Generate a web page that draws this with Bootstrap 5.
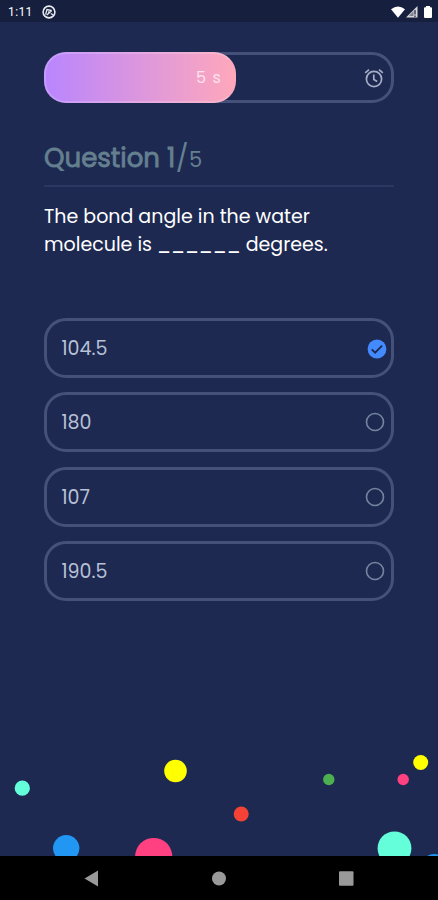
<!DOCTYPE html>
<html lang="en">
<head>
<meta charset="utf-8">
<meta name="viewport" content="width=device-width, initial-scale=1">
<title>Quiz</title>
<link href="https://cdn.jsdelivr.net/npm/bootstrap@5.3.0/dist/css/bootstrap.min.css" rel="stylesheet">
<style>
  body { background: #1d2951; color: #fff; font-family: Poppins, Inter, sans-serif; }
  .screen { width: 438px; height: 900px; }
  .status { height: 22px; background: #161f3d; padding: 2px 6px 0 8px; font: 400 12px/20px Roboto, sans-serif; }
  .status .clock { letter-spacing: .4px; width: 34px; }
  .quiz { padding: 30px 44px 0; }
  .timer { height: 51px; border: 3px solid #46517a; border-radius: 22px; margin-bottom: 38px; padding-right: 7px; }
  .timer-fill { width: 192px; height: 51px; margin: -3px 0 -3px -3px; border-radius: 22px; border: 2px solid #ffffff2e; border-right-color: transparent; background: linear-gradient(90deg, #b985ff, #ffa8bb) border-box; padding-right: 12px; font-size: 16px; letter-spacing: 1.1px; color: #ffe1ee; }
  .heading { height: 46px; color: #64808f; border-bottom: 2px solid #2a3760; line-height: 34px; }
  .heading .num { font-size: 26px; font-weight: 400; -webkit-text-stroke: .8px #64808f; }
  .heading .slash { font-size: 27px; font-weight: 400; line-height: 1; margin-left: .5px; }
  .heading .total { font-size: 21px; margin-left: .5px; }
  .prompt { font-size: 19px; line-height: 28px; margin-top: 15px; height: 116px; padding-top: 1px; }
  .choices { gap: 14.6px; }
  .choice { height: 59.900px; border: 3px solid #46517a; border-radius: 22px; padding: 0 6px 0 14.500px; font-size: 19px; color: #b8c0d6; }
  .choice > span { padding-top: 2px; }
  .choice .tick { margin-right: -2px; margin-top: 3px; }
  .dots { left: 0; top: 740px; }
  .navkeys { height: 44px; background: #000; }
</style>
<script src="https://cdn.jsdelivr.net/npm/bootstrap@5.3.0/dist/js/bootstrap.bundle.min.js"></script>
</head>
<body>
<div class="screen position-relative overflow-hidden d-flex flex-column">
  <header class="status d-flex align-items-center flex-shrink-0">
    <span class="clock">1:11</span>
    <svg width="14" height="14" viewBox="0 0 14 14" fill="none" stroke="#e8ebf2" stroke-width="1.6"><circle cx="7" cy="7" r="5.900"/><path d="M3.600 9.500 5 4.500l4.500 1M4.800 10 9.800 5.500M9 8.500l2 1.500M6 7l2.500.5" stroke-width="1.300"/></svg>
    <svg class="ms-auto" width="41" height="14" viewBox="0 0 41 14"><path d="M0 4.2Q7 -1.4 14 4.2L7 12.8Z" fill="#fff"/><path d="M26.5 1v11.5H15Z" fill="#d8d8da"/><path d="M22.5 6v5h-4.500Z" fill="#7d8192"/><path d="M24 5v4.500M24 10.500v1.500" stroke="#161f3d" stroke-width="1.200"/><path d="M35 1h4v1.3h1a1 1 0 0 1 1 1v8.8a1 1 0 0 1-1 1h-6a1 1 0 0 1-1-1V3.300a1 1 0 0 1 1-1h1Z" fill="#fff"/></svg>
  </header>
  <main class="quiz flex-grow-1">
    <div class="timer d-flex align-items-center justify-content-between">
      <div class="timer-fill d-flex align-items-center justify-content-end">5 s</div>
      <svg width="20" height="20" viewBox="0 0 20 20" fill="none" stroke="#a4adc5" stroke-width="1.7"><circle cx="10" cy="11" r="7.6"/><path d="M9.800 6.500v5l3.400 2M1.200 4.800 5 1.600M18.800 4.800 15 1.600"/></svg>
    </div>
    <h1 class="heading d-flex align-items-baseline mb-0"><span class="num">Question 1</span><span class="slash">/</span><span class="total fw-normal">5</span></h1>
    <p class="prompt mb-0">The bond angle in the water<br>molecule is ______ degrees.</p>
    <div class="choices d-flex flex-column">
      <div class="choice d-flex align-items-center justify-content-between"><span>104.5</span>
        <svg class="tick" width="20" height="20" viewBox="0 0 20 20"><circle cx="10" cy="10" r="9.400" fill="#448aff"/><path d="m4.700 10.300 3.400 3.400 7-7" fill="none" stroke="#1d2951" stroke-width="1.800"/></svg></div>
      <div class="choice d-flex align-items-center justify-content-between"><span>180</span>
        <svg width="20" height="20" viewBox="0 0 20 20"><circle cx="10" cy="10" r="8.500" fill="none" stroke="#7485a0" stroke-width="1.600"/></svg></div>
      <div class="choice d-flex align-items-center justify-content-between"><span>107</span>
        <svg width="20" height="20" viewBox="0 0 20 20"><circle cx="10" cy="10" r="8.500" fill="none" stroke="#7485a0" stroke-width="1.600"/></svg></div>
      <div class="choice d-flex align-items-center justify-content-between"><span>190.5</span>
        <svg width="20" height="20" viewBox="0 0 20 20"><circle cx="10" cy="10" r="8.500" fill="none" stroke="#7485a0" stroke-width="1.600"/></svg></div>
    </div>
  </main>
  <svg class="dots position-absolute" width="438" height="116" viewBox="0 740 438 116">
    <circle cx="22.300" cy="788.200" r="7.600" fill="#64ffda"/><circle cx="175.500" cy="771" r="11.300" fill="#ff0"/>
    <circle cx="66.200" cy="848.300" r="13.200" fill="#2196f3"/><circle cx="153.700" cy="856.500" r="18.600" fill="#ff4081"/>
    <circle cx="241.200" cy="814" r="7.500" fill="#f44336"/><circle cx="328.800" cy="779.500" r="5.700" fill="#4caf50"/>
    <circle cx="403.200" cy="779.500" r="5.700" fill="#ff4081"/><circle cx="420.700" cy="762.500" r="7.500" fill="#ff0"/>
    <circle cx="394.500" cy="848.300" r="16.900" fill="#64ffda"/><circle cx="434.500" cy="869" r="14.900" fill="#2196f3"/>
  </svg>
  <nav class="navkeys flex-shrink-0">
    <svg class="d-block" width="438" height="44" viewBox="0 856 438 44" fill="#999"><path d="M84.500 878.500 98 870.500v16Z"/><circle cx="219" cy="878.500" r="7"/><rect x="339" y="871.300" width="14.500" height="14.500" rx="1"/></svg>
  </nav>
</div>
</body>
</html>
